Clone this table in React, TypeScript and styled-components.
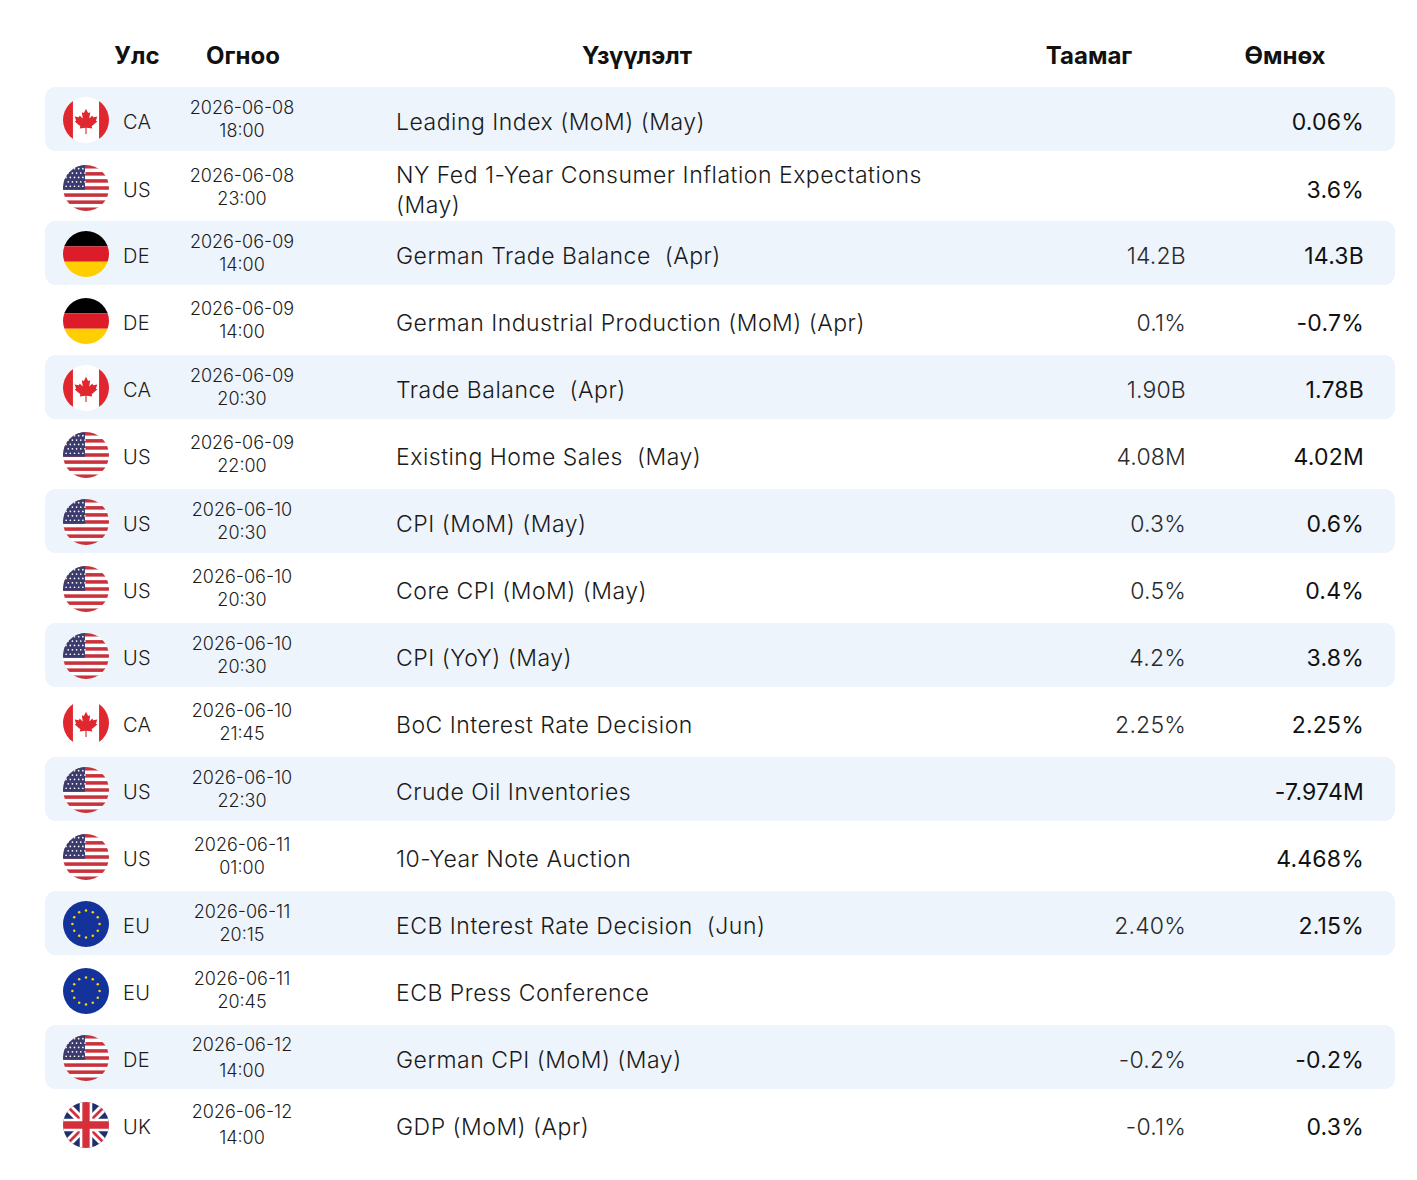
import { useId } from 'react';
import styled, { createGlobalStyle } from 'styled-components';

const GlobalStyle = createGlobalStyle`
    body {
        margin: 0;
        background: #ffffff;
        font-family: Inter, 'Noto Sans', sans-serif;
        color: #1c1c1c;
    }
`;

type Country = 'CA' | 'US' | 'DE' | 'EU' | 'UK';

interface EventRow {
    code: string;
    flag: Country;
    date: string;
    time: string;
    title: string;
    forecast?: string;
    previous?: string;
    loose?: boolean;
}

const EVENTS: EventRow[] = [
    { code: 'CA', flag: 'CA', date: '2026-06-08', time: '18:00', title: 'Leading Index (MoM) (May)', previous: '0.06%' },
    { code: 'US', flag: 'US', date: '2026-06-08', time: '23:00', title: 'NY Fed 1-Year Consumer Inflation Expectations (May)', previous: '3.6%' },
    { code: 'DE', flag: 'DE', date: '2026-06-09', time: '14:00', title: 'German Trade Balance\u00a0 (Apr)', forecast: '14.2B', previous: '14.3B' },
    { code: 'DE', flag: 'DE', date: '2026-06-09', time: '14:00', title: 'German Industrial Production (MoM) (Apr)', forecast: '0.1%', previous: '-0.7%' },
    { code: 'CA', flag: 'CA', date: '2026-06-09', time: '20:30', title: 'Trade Balance\u00a0 (Apr)', forecast: '1.90B', previous: '1.78B' },
    { code: 'US', flag: 'US', date: '2026-06-09', time: '22:00', title: 'Existing Home Sales\u00a0 (May)', forecast: '4.08M', previous: '4.02M' },
    { code: 'US', flag: 'US', date: '2026-06-10', time: '20:30', title: 'CPI (MoM) (May)', forecast: '0.3%', previous: '0.6%' },
    { code: 'US', flag: 'US', date: '2026-06-10', time: '20:30', title: 'Core CPI (MoM) (May)', forecast: '0.5%', previous: '0.4%' },
    { code: 'US', flag: 'US', date: '2026-06-10', time: '20:30', title: 'CPI (YoY) (May)', forecast: '4.2%', previous: '3.8%' },
    { code: 'CA', flag: 'CA', date: '2026-06-10', time: '21:45', title: 'BoC Interest Rate Decision', forecast: '2.25%', previous: '2.25%' },
    { code: 'US', flag: 'US', date: '2026-06-10', time: '22:30', title: 'Crude Oil Inventories', previous: '-7.974M' },
    { code: 'US', flag: 'US', date: '2026-06-11', time: '01:00', title: '10-Year Note Auction', previous: '4.468%' },
    { code: 'EU', flag: 'EU', date: '2026-06-11', time: '20:15', title: 'ECB Interest Rate Decision\u00a0 (Jun)', forecast: '2.40%', previous: '2.15%' },
    { code: 'EU', flag: 'EU', date: '2026-06-11', time: '20:45', title: 'ECB Press Conference' },
    { code: 'DE', flag: 'US', date: '2026-06-12', time: '14:00', title: 'German CPI (MoM) (May)', forecast: '-0.2%', previous: '-0.2%', loose: true },
    { code: 'UK', flag: 'UK', date: '2026-06-12', time: '14:00', title: 'GDP (MoM) (Apr)', forecast: '-0.1%', previous: '0.3%', loose: true },
];

const Page = styled.div`
    padding: 30px 22px 40px 45px;
    width: 1350px;
`;

const HeaderRow = styled.div`
    display: grid;
    grid-template-columns: 52px 80px 6px 120px 134px 400px 172px 160px 36px 160px;
    height: 57px;
    align-items: start;
`;

const HeaderCell = styled.div<{ $col: number }>`
    grid-column: ${({ $col }) => $col};
    text-align: center;
    font-size: 24px;
    font-weight: 700;
    color: #111111;
    line-height: 52px;
    white-space: nowrap;
`;

const List = styled.div`
    display: flex;
    flex-direction: column;
    gap: 3px;
`;

const Row = styled.div<{ $shaded: boolean }>`
    display: grid;
    grid-template-columns: 46px 64px 138px 1fr 200px 178px;
    align-items: center;
    height: 64px;
    padding: 0 31px 0 18px;
    border-radius: 11px;
    background: ${({ $shaded }) => ($shaded ? '#eef4fb' : 'transparent')};
`;

const FlagBox = styled.div`
    width: 46px;
    height: 46px;
    display: flex;
    margin-top: 1px;

    svg {
        width: 46px;
        height: 46px;
        display: block;
    }
`;

const Code = styled.div`
    padding-left: 14px;
    padding-top: 6px;
    font-size: 20px;
    font-weight: 300;
    color: #1c1c1c;
    letter-spacing: 0.3px;
`;

const DateCell = styled.div<{ $loose?: boolean }>`
    text-align: center;
    font-size: 18px;
    font-weight: 300;
    line-height: ${({ $loose }) => ($loose ? '26px' : '23px')};
    padding-top: ${({ $loose }) => ($loose ? '2px' : '0')};
    color: #1c1c1c;
`;

const Title = styled.div`
    padding-left: 85px;
    padding-top: 6px;
    max-width: 550px;
    font-size: 23px;
    font-weight: 300;
    line-height: 30px;
    letter-spacing: 0.5px;
    color: #1a1a1a;
`;

const Value = styled.div<{ $strong?: boolean }>`
    text-align: right;
    padding-top: 6px;
    font-size: 23px;
    font-weight: ${({ $strong }) => ($strong ? 400 : 300)};
    color: ${({ $strong }) => ($strong ? '#111111' : '#2a2a2a')};
    letter-spacing: 0.2px;
`;

const CircleFlag = ({ children }: { children: React.ReactNode }) => {
    const id = useId().replace(/:/g, '');
    return (
        <svg viewBox="0 0 44 44">
            <defs>
                <clipPath id={id}>
                    <circle cx="22" cy="22" r="22" />
                </clipPath>
            </defs>
            <g clipPath={`url(#${id})`}>{children}</g>
        </svg>
    );
};

const FlagCA = () => (
    <CircleFlag>
        <rect width="44" height="44" fill="#ffffff" />
        <rect x="0" width="9.5" height="44" fill="#e0262e" />
        <rect x="34.5" width="9.5" height="44" fill="#e0262e" />
        <path
            transform="translate(8.5 8.5) scale(1.35)"
            fill="#e0262e"
            d="M10 2 L11.5 5 L13 4.5 L12.3 9 L14.5 6.8 L15 8 L18 7.5 L17 10.5 L18 11 L14 14.5 L14.5 16 L10.4 15.5 L10.4 20 L9.6 20 L9.6 15.5 L5.5 16 L6 14.5 L2 11 L3 10.5 L2 7.5 L5 8 L5.5 6.8 L7.7 9 L7 4.5 L8.5 5 Z"
        />
    </CircleFlag>
);

const FlagUS = () => (
    <CircleFlag>
        <rect width="44" height="44" fill="#ffffff" />
        {Array.from({ length: 7 }).map((_, i) => (
            <rect key={i} x="0" y={i * 6.77} width="44" height="3.38" fill="#c8323c" />
        ))}
        <rect x="0" y="0" width="21" height="23.7" fill="#3c3b6e" />
        {Array.from({ length: 5 }).map((_, r) =>
            Array.from({ length: 5 }).map((__, c) => (
                <circle
                    key={`${r}-${c}`}
                    cx={3 + c * 4 + (r % 2 ? 2 : 0)}
                    cy={3.5 + r * 4.2}
                    r="0.8"
                    fill="#ffffff"
                />
            )),
        )}
    </CircleFlag>
);

const FlagDE = () => (
    <CircleFlag>
        <rect y="0" width="44" height="14.7" fill="#000000" />
        <rect y="14.7" width="44" height="14.7" fill="#dd1c2a" />
        <rect y="29.4" width="44" height="14.6" fill="#ffce00" />
    </CircleFlag>
);

const FlagEU = () => (
    <CircleFlag>
        <rect width="44" height="44" fill="#13329a" />
        {Array.from({ length: 12 }).map((_, i) => {
            const a = (i / 12) * Math.PI * 2;
            return (
                <circle key={i} cx={22 + Math.cos(a) * 13} cy={22 + Math.sin(a) * 13} r="1.2" fill="#ffd200" />
            );
        })}
    </CircleFlag>
);

const FlagUK = () => (
    <CircleFlag>
        <rect width="44" height="44" fill="#1f2f6e" />
        <path d="M0 0 L44 44 M44 0 L0 44" stroke="#ffffff" strokeWidth="8" />
        <path d="M0 0 L44 44 M44 0 L0 44" stroke="#d42f3b" strokeWidth="2.6" />
        <path d="M22 0 V44 M0 22 H44" stroke="#ffffff" strokeWidth="12" />
        <path d="M22 0 V44 M0 22 H44" stroke="#d42f3b" strokeWidth="7" />
    </CircleFlag>
);

const FLAGS: Record<Country, () => JSX.Element> = {
    CA: FlagCA,
    US: FlagUS,
    DE: FlagDE,
    EU: FlagEU,
    UK: FlagUK,
};

const HEADERS: { label: string; col: number }[] = [
    { label: 'Улс', col: 2 },
    { label: 'Огноо', col: 4 },
    { label: 'Үзүүлэлт', col: 6 },
    { label: 'Таамаг', col: 8 },
    { label: 'Өмнөх', col: 10 },
];

export default function App() {
    return (
        <>
            <GlobalStyle />
            <Page>
                <HeaderRow>
                    {HEADERS.map((h) => (
                        <HeaderCell key={h.label} $col={h.col}>
                            {h.label}
                        </HeaderCell>
                    ))}
                </HeaderRow>
                <List>
                    {EVENTS.map((ev, i) => {
                        const Flag = FLAGS[ev.flag];
                        return (
                            <Row key={i} $shaded={i % 2 === 0}>
                                <FlagBox>
                                    <Flag />
                                </FlagBox>
                                <Code>{ev.code}</Code>
                                <DateCell $loose={ev.loose}>
                                    {ev.date}
                                    <br />
                                    {ev.time}
                                </DateCell>
                                <Title>{ev.title}</Title>
                                <Value>{ev.forecast}</Value>
                                <Value $strong>{ev.previous}</Value>
                            </Row>
                        );
                    })}
                </List>
            </Page>
        </>
    );
}
